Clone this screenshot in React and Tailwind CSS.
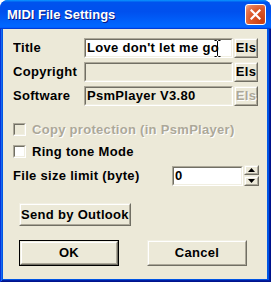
import React from 'react'

// Classic Win32 control frames on an XP Luna window
const sunken =
  'border border-t-[#ACA899] border-l-[#ACA899] border-b-white border-r-white'
const sunkenInner =
  'border border-t-[#716F64] border-l-[#716F64] border-b-[#F1EFE2] border-r-[#F1EFE2]'
const raised =
  'border border-t-[#F1EFE2] border-l-[#F1EFE2] border-b-[#716F64] border-r-[#716F64]'
const raisedInner =
  'border border-t-white border-l-white border-b-[#ACA899] border-r-[#ACA899]'

function Sunken({ className = '', bg = 'bg-white', children }) {
  return (
    <div className={`${sunken} ${className}`}>
      <div className={`${sunkenInner} ${bg} flex h-full items-center overflow-hidden pl-[1px] whitespace-nowrap`}>
        {children}
      </div>
    </div>
  )
}

function Button({ className = '', disabled = false, isDefault = false, children }) {
  const inner = (
    <div className={`${raised} h-full`}>
      <div className={`${raisedInner} flex h-full items-center justify-center bg-[#ECE9D8]`}>
        <span className={disabled ? 'text-[#ACA899] [text-shadow:1px_1px_#fff]' : ''}>{children}</span>
      </div>
    </div>
  )
  if (isDefault) {
    return <div className={`border border-black ${className}`}>{inner}</div>
  }
  return <div className={className}>{inner}</div>
}

function Checkbox({ label, disabled = false }) {
  return (
    <div className="flex h-[13px] items-center">
      <div className={`${sunken} h-[13px] w-[13px] shrink-0`}>
        <div className={`${sunkenInner} h-full ${disabled ? 'bg-[#ECE9D8]' : 'bg-white'}`} />
      </div>
      <span className={`ml-[6px] whitespace-nowrap ${disabled ? 'text-[#ACA899] [text-shadow:1px_1px_#fff]' : ''}`}>{label}</span>
    </div>
  )
}

function Row({ label, children }) {
  return (
    <div className="flex h-[20px] items-center">
      <span className="w-[71px] shrink-0 overflow-hidden whitespace-nowrap">{label}</span>
      {children}
    </div>
  )
}

function SpinArrow({ up }) {
  return (
    <svg width="7" height="4" viewBox="0 0 7 4">
      <path d={up ? 'M3.5 0 L7 4 L0 4 Z' : 'M0 0 L7 0 L3.5 4 Z'} fill="#000" />
    </svg>
  )
}

export default function App() {
  return (
    <div className="h-[282px] w-[271px] bg-white font-['Liberation_Sans',Arial,sans-serif] text-[13px] font-bold tracking-[0.3px] text-black">
      <div className="flex h-full flex-col overflow-hidden rounded-t-[8px] bg-[#0055E5]">
        {/* Title bar */}
        <div className="flex h-[29px] shrink-0 items-center justify-between bg-[linear-gradient(180deg,#0997ff,#0053ee_8%,#0050ee_40%,#0066ff_88%,#0066ff_93%,#005bff_95%,#003dd7_96%,#003dd7)] pl-[7px] pr-[5px]">
          <span className="text-[13px] tracking-normal text-white [text-shadow:1px_1px_#0a1883]">MIDI File Settings</span>
          <div className="flex h-[21px] w-[21px] items-center justify-center rounded-[3px] border border-white bg-[radial-gradient(circle_at_85%_85%,#c93f12_0%,#dc5a2c_55%,#e67a55_80%,#f3b39a_100%)]">
            <svg width="11" height="11" viewBox="0 0 11 11">
              <path d="M1.5 1.5 L9.5 9.5 M9.5 1.5 L1.5 9.5" stroke="#fff" strokeWidth="2.2" strokeLinecap="square" />
            </svg>
          </div>
        </div>

        {/* Frame + client area */}
        <div className="flex flex-1 flex-col pb-[3px] pl-[3px] pr-[4px] shadow-[inset_1px_0_#0831d9,inset_-1px_-1px_#00138c,inset_2px_0_#166aee,inset_-2px_-2px_#001ea0]">
          <div className="flex flex-1 flex-col bg-[#ECE9D8] pl-[10px] pt-[9px]">
            <div className="flex flex-col gap-[4px]">
              <Row label="Title">
                <Sunken className="relative h-[20px] w-[149px]">
                  <span>Love don't let me go</span>
                  <svg className="absolute left-[129px] top-[1px]" width="7" height="17" viewBox="0 0 7 17">
                    <path d="M0.5 0.5 H2.5 L3.5 1.5 L4.5 0.5 H6.5 M3.5 1.5 V15.5 M0.5 16.5 H2.5 L3.5 15.5 L4.5 16.5 H6.5" stroke="#000" fill="none" />
                  </svg>
                </Sunken>
                <Button className="ml-[1px] h-[20px] w-[24px]">Els</Button>
              </Row>
              <Row label="Copyright">
                <Sunken className="h-[20px] w-[149px]" bg="bg-[#ECE9D8]" />
                <Button className="ml-[1px] h-[20px] w-[24px]">Els</Button>
              </Row>
              <Row label="Software">
                <Sunken className="h-[20px] w-[149px]" bg="bg-[#ECE9D8]">
                  <span>PsmPlayer V3.80</span>
                </Sunken>
                <Button className="ml-[1px] h-[20px] w-[24px]" disabled>Els</Button>
              </Row>
            </div>

            <div className="mt-[17px]">
              <Checkbox label="Copy protection (in PsmPlayer)" disabled />
            </div>
            <div className="mt-[9px]">
              <Checkbox label="Ring tone Mode" />
            </div>

            <div className="mt-[7px] flex h-[21px] items-center">
              <span className="w-[159px] shrink-0">File size limit (byte)</span>
              <Sunken className="h-[20px] w-[71px]">
                <span>0</span>
              </Sunken>
              <div className="ml-[1px] flex h-[21px] w-[15px] flex-col">
                <Button className="h-[10px]"><SpinArrow up /></Button>
                <Button className="mt-[1px] h-[10px]"><SpinArrow /></Button>
              </div>
            </div>

            <Button className="ml-[6px] mt-[17px] h-[23px] w-[112px]">Send by Outlook</Button>

            <div className="ml-[6px] mt-[14px] flex gap-[28px]">
              <Button className="h-[26px] w-[100px]" isDefault>OK</Button>
              <Button className="h-[26px] w-[100px]">Cancel</Button>
            </div>
          </div>
        </div>
      </div>
    </div>
  )
}
